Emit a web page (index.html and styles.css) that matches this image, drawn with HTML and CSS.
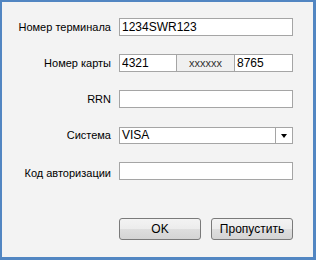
FILE: index.html
```html
<!DOCTYPE html>
<html>
<head>
    <title>Авторизация</title>
    <link rel="stylesheet" href="styles.css">
</head>
<body>
    <div class="window">
        <form class="form">
            <label class="label" for="terminal">Номер терминала</label>
            <input class="field" id="terminal" type="text" value="1234SWR123">

            <label class="label" for="card1">Номер карты</label>
            <div class="card-field">
                <input class="card-part" id="card1" type="text" value="4321">
                <div class="card-part masked">xxxxxx</div>
                <input class="card-part" type="text" value="8765">
            </div>

            <label class="label" for="rrn">RRN</label>
            <input class="field" id="rrn" type="text">

            <label class="label" for="system">Система</label>
            <div class="combo" id="system">
                <span class="combo-value">VISA</span>
                <span class="combo-button"><span class="arrow"></span></span>
            </div>

            <label class="label auth" for="auth">Код авторизации</label>
            <input class="field auth" id="auth" type="text">
        </form>
        <div class="buttons">
            <button type="button" class="btn">OK</button>
            <button type="button" class="btn">Пропустить</button>
        </div>
    </div>
</body>
</html>
```

FILE: styles.css
```css
html, body {
    margin: 0;
    padding: 0;
}
body {
    font-family: "Liberation Sans", Arial, sans-serif;
    font-size: 12px;
    color: #000;
}
.window {
    box-sizing: border-box;
    width: 316px;
    height: 260px;
    background: #f3f3f3;
    border-style: solid;
    border-color: #5286c2;
    border-width: 2px 3px 3px 2px;
    padding-top: 16px;
}
.form {
    display: grid;
    grid-template-columns: 109px 174px;
    grid-auto-rows: 18px;
    column-gap: 8px;
    row-gap: 18px;
    margin: 0;
}
.label {
    font-size: 11px;
    text-align: right;
    line-height: 18px;
    white-space: nowrap;
}
.auth {
    margin-top: 2px;
}
.field,
.card-part {
    box-sizing: border-box;
    height: 18px;
    margin: 0;
    padding: 0 2px;
    border: 1px solid #a5a5a5;
    background: #fff;
    font-family: inherit;
    font-size: 12px;
    color: #000;
    outline: none;
}
.field {
    width: 174px;
}
.card-field {
    display: flex;
}
.card-part {
    width: 58px;
    min-width: 0;
}
.card-part + .card-part {
    margin-left: -1px;
    width: 59px;
}
.masked {
    background: #f0f0f0;
    color: #333;
    font-size: 11px;
    line-height: 16px;
    text-align: center;
}
.combo {
    box-sizing: border-box;
    display: flex;
    height: 17px;
    margin-top: 1px;
    border: 1px solid #a5a5a5;
    background: #fff;
}
.combo-value {
    flex: 1;
    padding-left: 2px;
    line-height: 15px;
}
.combo-button {
    width: 16px;
    border-left: 1px solid #a5a5a5;
    display: flex;
    align-items: center;
    justify-content: center;
}
.arrow {
    width: 0;
    height: 0;
    border-left: 3.5px solid transparent;
    border-right: 3.5px solid transparent;
    border-top: 4px solid #000;
}
.buttons {
    display: flex;
    gap: 10px;
    margin: 38px 0 0 117px;
}
.btn {
    box-sizing: border-box;
    width: 82px;
    height: 22px;
    padding: 0;
    border: 1px solid #7a7a7a;
    border-radius: 3px;
    background: linear-gradient(#f3f3f3 0%, #ececec 50%, #dedede 51%, #d4d4d4 100%);
    font-family: inherit;
    font-size: 12px;
    color: #000;
}
```
